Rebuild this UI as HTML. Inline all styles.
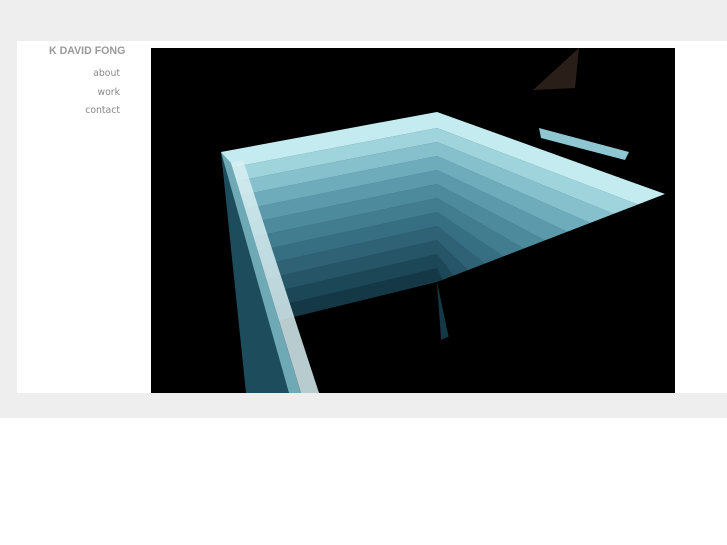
<!DOCTYPE html>
<html><head><style>
body{margin:0;width:727px;height:545px;background:#fff;position:relative;overflow:hidden;font-family:"DejaVu Sans","Liberation Sans",sans-serif}
.g1{position:absolute;left:0;top:0;width:727px;height:41px;background:#eeeeee}
.g2{position:absolute;left:0;top:41px;width:17px;height:352px;background:#eeeeee}
.g3{position:absolute;left:0;top:393px;width:727px;height:25px;background:#eeeeee}
.t{position:absolute;right:607px;color:#888;font-size:9.3px;text-align:right}
.h{position:absolute;left:49px;top:45px;font-family:"Liberation Sans",sans-serif;font-weight:bold;font-size:10.6px;color:#999}
</style></head><body>
<div class="g1"></div><div class="g2"></div><div class="g3"></div>
<div class="h">K DAVID FONG</div>
<div class="t" style="top:68px">about</div>
<div class="t" style="top:87px">work</div>
<div class="t" style="top:105px">contact</div>
<svg style="position:absolute;left:151px;top:48px" width="524" height="345" viewBox="0 0 524 345">
<rect width="524" height="345" fill="#000"/>
<polygon points="70,104 286,64 514,146 150,345 95,345" fill="#1d4d5c"/>
<polygon points="70,104 286,64 514,146 496,160 286,80 78,120" fill="#c4ecf0"/>
<polygon points="78,120 286,80 496,160 478,172 286,94 82,134" fill="#9fd4dc"/>
<polygon points="82,134 286,94 478,172 460,184 286,108 86,148" fill="#86c0cc"/>
<polygon points="86,148 286,108 460,184 442,196 286,122 90,162" fill="#6eacbb"/>
<polygon points="90,162 286,122 442,196 424,208 286,136 94,176" fill="#5c9aab"/>
<polygon points="94,176 286,136 424,208 406,220 286,150 98,190" fill="#4d8a9c"/>
<polygon points="98,190 286,150 406,220 388,232 286,164 102,204" fill="#417c8f"/>
<polygon points="102,204 286,164 388,232 370,244 286,178 106,218" fill="#376f82"/>
<polygon points="106,218 286,178 370,244 352,256 286,192 110,232" fill="#2e6274"/>
<polygon points="110,232 286,192 352,256 334,268 286,206 114,246" fill="#255566"/>
<polygon points="114,246 286,206 334,268 316,280 286,220 118,260" fill="#1c4756"/>
<polygon points="118,260 286,220 316,280 290,292 286,234 122,274" fill="#143845"/>
<polygon points="122,274 286,234 290,292 200,345 150,345 126,290" fill="#000"/>
<polygon points="286,234 514,146 540,150 524,345 250,345 300,300" fill="#000"/>
<polygon points="80,115 92,112 168,345 150,345" fill="#d8eef2" opacity=".85"/>
<polygon points="70,104 80,115 150,345 138,345" fill="#6fa9b6"/>
<polygon points="388,80 478,104 474,112 390,90" fill="#8ec6d2"/>
<polygon points="382,42 428,0 424,40" fill="#2a1e18"/>
</svg>
</body></html>
